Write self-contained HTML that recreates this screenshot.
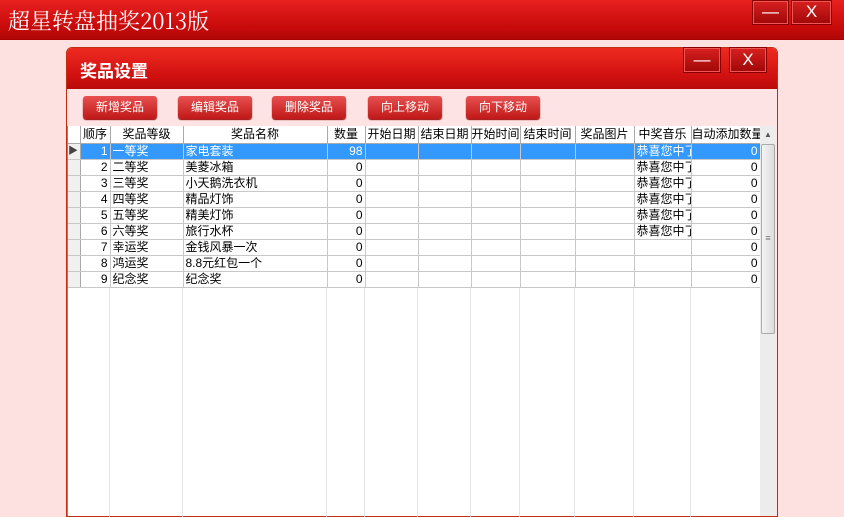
<!DOCTYPE html>
<html><head><meta charset="utf-8"><style>
*{margin:0;padding:0;box-sizing:border-box}
body{width:844px;height:511px;overflow:hidden;background:#fde0e0;font-family:"Liberation Sans","Noto Sans CJK SC",sans-serif;position:relative}
.tb{position:absolute;left:0;top:0;width:844px;height:40px;background:linear-gradient(#e82020,#c80a0a 70%,#b00808);border-bottom:1px solid #a00}
.tb .t{position:absolute;left:8px;top:5px;color:#fff;font-size:22px;font-family:"Noto Serif CJK SC",serif}
.wb{position:absolute;background:linear-gradient(#d82020,#a00808);border:1px solid #800;color:#fff;text-align:center;font-size:17px;box-shadow:inset 0 0 0 1px #e55}
.dlg{position:absolute;left:66px;top:47px;width:712px;height:470px;background:#fde3e3;border:1px solid #c03010;border-radius:6px 6px 0 0}
.dh{position:absolute;left:0;top:0;width:710px;height:41px;background:linear-gradient(#ee2a20,#d01010 70%,#b80a0a);border-radius:5px 5px 0 0}
.dh .t{position:absolute;left:13px;top:9px;color:#fff;font-size:17px;font-weight:bold}
.btn{position:absolute;top:96px;width:74px;height:23px;background:linear-gradient(#e85050,#c01818);border-radius:3px;color:#fff;font-size:12px;text-align:center;line-height:23px;box-shadow:0 1px 1px #900}
.grid{position:absolute;left:67px;top:126px;width:693px;height:390px;background:#fff;border-left:1px solid #888}
table{border-collapse:collapse;table-layout:fixed;width:692px;font-size:12px;position:absolute;left:0;top:0}
td{height:16px;border-right:1px solid #c8c8c8;border-bottom:1px solid #c8c8c8;padding:0 2px;white-space:nowrap;overflow:hidden;line-height:15px}
tr.h td{height:17px;background:#fff;text-align:center;border-right:1px solid #aaa;border-bottom:1px solid #aaa;padding:0}
td.i{background:#f0f0f0;border-right:1px solid #aaa;padding:0}
.r{text-align:right}
tr.s td{background:#3399ff;color:#fff}
tr.s td.i{background:#f0f0f0}
.sb{position:absolute;left:760px;top:126px;width:16px;height:390px;background:#ececec}
</style></head><body>
<div class="tb"><div class="t">超星转盘抽奖2013版</div></div>
<div class="wb" style="left:752px;top:0;width:37px;height:25px;line-height:22px">—</div>
<div class="wb" style="left:791px;top:0;width:41px;height:25px;line-height:22px">X</div>
<div class="dlg"><div class="dh"><div class="t">奖品设置</div></div></div>
<div class="wb" style="left:683px;top:47px;width:38px;height:26px;line-height:24px">—</div>
<div class="wb" style="left:729px;top:47px;width:38px;height:26px;line-height:24px">X</div>
<div class="btn" style="left:83px">新增奖品</div>
<div class="btn" style="left:178px">编辑奖品</div>
<div class="btn" style="left:272px">删除奖品</div>
<div class="btn" style="left:368px">向上移动</div>
<div class="btn" style="left:466px">向下移动</div>
<div class="grid">
<div style="position:absolute;left:0;top:161px;width:692px;height:230px;background:linear-gradient(90deg,transparent 41px,#e4e4e4 41px,#e4e4e4 42px,transparent 42px,transparent 114px,#e4e4e4 114px,#e4e4e4 115px,transparent 115px,transparent 258px,#e4e4e4 258px,#e4e4e4 259px,transparent 259px,transparent 296px,#e4e4e4 296px,#e4e4e4 297px,transparent 297px,transparent 349px,#e4e4e4 349px,#e4e4e4 350px,transparent 350px,transparent 402px,#e4e4e4 402px,#e4e4e4 403px,transparent 403px,transparent 451px,#e4e4e4 451px,#e4e4e4 452px,transparent 452px,transparent 506px,#e4e4e4 506px,#e4e4e4 507px,transparent 507px,transparent 565px,#e4e4e4 565px,#e4e4e4 566px,transparent 566px,transparent 622px,#e4e4e4 622px,#e4e4e4 623px,transparent 623px)"></div>
<table>
<colgroup><col style="width:12px"><col style="width:30px"><col style="width:73px"><col style="width:144px"><col style="width:38px"><col style="width:53px"><col style="width:53px"><col style="width:49px"><col style="width:55px"><col style="width:59px"><col style="width:57px"><col style="width:69px"></colgroup>
<tr class="h"><td class="i"></td><td>顺序</td><td>奖品等级</td><td>奖品名称</td><td>数量</td><td>开始日期</td><td>结束日期</td><td>开始时间</td><td>结束时间</td><td>奖品图片</td><td>中奖音乐</td><td>自动添加数量</td></tr>
<tr class="s"><td class="i" style="color:#444;font-size:10px">▶</td><td class="r">1</td><td>一等奖</td><td>家电套装</td><td class="r">98</td><td></td><td></td><td></td><td></td><td></td><td>恭喜您中了</td><td class="r">0</td></tr>
<tr><td class="i"></td><td class="r">2</td><td>二等奖</td><td>美菱冰箱</td><td class="r">0</td><td></td><td></td><td></td><td></td><td></td><td>恭喜您中了</td><td class="r">0</td></tr>
<tr><td class="i"></td><td class="r">3</td><td>三等奖</td><td>小天鹅洗衣机</td><td class="r">0</td><td></td><td></td><td></td><td></td><td></td><td>恭喜您中了</td><td class="r">0</td></tr>
<tr><td class="i"></td><td class="r">4</td><td>四等奖</td><td>精品灯饰</td><td class="r">0</td><td></td><td></td><td></td><td></td><td></td><td>恭喜您中了</td><td class="r">0</td></tr>
<tr><td class="i"></td><td class="r">5</td><td>五等奖</td><td>精美灯饰</td><td class="r">0</td><td></td><td></td><td></td><td></td><td></td><td>恭喜您中了</td><td class="r">0</td></tr>
<tr><td class="i"></td><td class="r">6</td><td>六等奖</td><td>旅行水杯</td><td class="r">0</td><td></td><td></td><td></td><td></td><td></td><td>恭喜您中了</td><td class="r">0</td></tr>
<tr><td class="i"></td><td class="r">7</td><td>幸运奖</td><td>金钱风暴一次</td><td class="r">0</td><td></td><td></td><td></td><td></td><td></td><td></td><td class="r">0</td></tr>
<tr><td class="i"></td><td class="r">8</td><td>鸿运奖</td><td>8.8元红包一个</td><td class="r">0</td><td></td><td></td><td></td><td></td><td></td><td></td><td class="r">0</td></tr>
<tr><td class="i"></td><td class="r">9</td><td>纪念奖</td><td>纪念奖</td><td class="r">0</td><td></td><td></td><td></td><td></td><td></td><td></td><td class="r">0</td></tr>
</table>
</div>
<div class="sb">
<div style="position:absolute;left:0;top:0;width:16px;height:17px;text-align:center;font-size:8px;color:#555;line-height:17px">▲</div>
<div style="position:absolute;left:1px;top:18px;width:14px;height:190px;background:linear-gradient(90deg,#f4f4f4,#dcdcdc);border:1px solid #aaa;border-radius:2px;text-align:center;font-size:9px;color:#777;line-height:186px">≡</div>
</div>
</body></html>
